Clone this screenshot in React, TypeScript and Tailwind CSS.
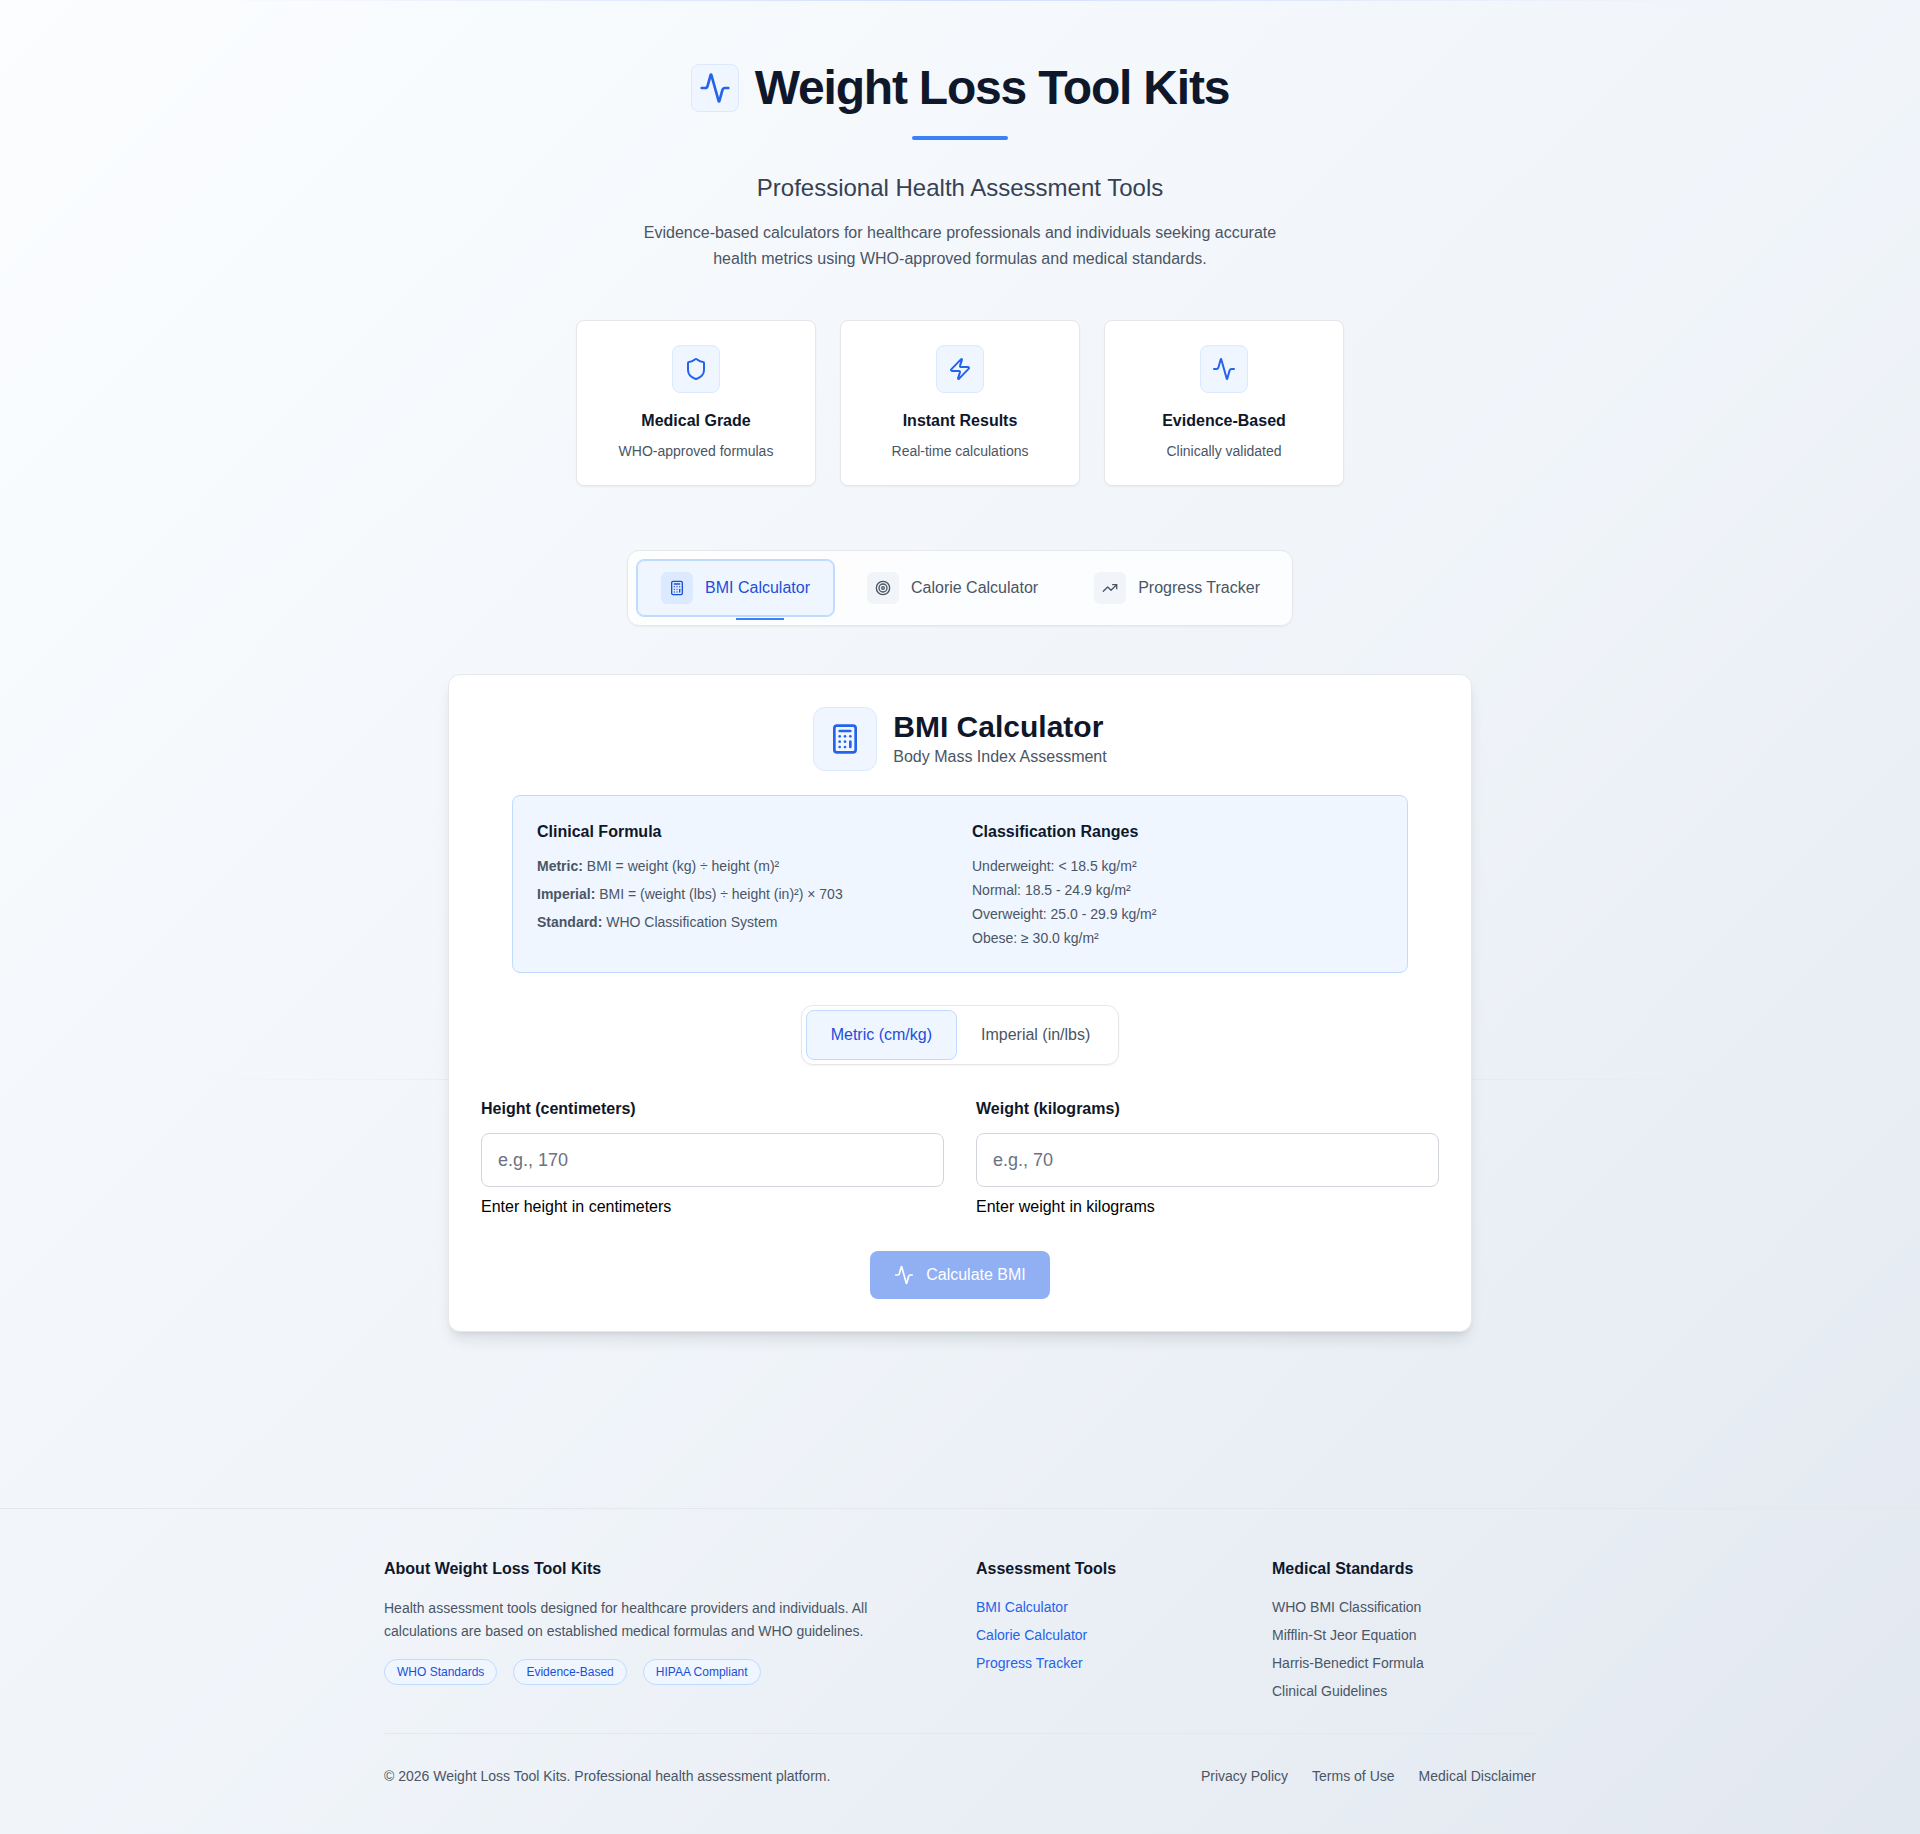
import { useState } from 'react';
import type { FormEvent } from 'react';
import { Activity, Calculator, Shield, Target, TrendingUp, Zap } from 'lucide-react';
import type { LucideIcon } from 'lucide-react';

type Units = 'metric' | 'imperial';

const features: { icon: LucideIcon; title: string; text: string }[] = [
  { icon: Shield, title: 'Medical Grade', text: 'WHO-approved formulas' },
  { icon: Zap, title: 'Instant Results', text: 'Real-time calculations' },
  { icon: Activity, title: 'Evidence-Based', text: 'Clinically validated' },
];

const tabs: { id: string; icon: LucideIcon; label: string }[] = [
  { id: 'bmi', icon: Calculator, label: 'BMI Calculator' },
  { id: 'calorie', icon: Target, label: 'Calorie Calculator' },
  { id: 'progress', icon: TrendingUp, label: 'Progress Tracker' },
];

const formulas = [
  { name: 'Metric:', text: 'BMI = weight (kg) ÷ height (m)²' },
  { name: 'Imperial:', text: 'BMI = (weight (lbs) ÷ height (in)²) × 703' },
  { name: 'Standard:', text: 'WHO Classification System' },
];

const ranges = [
  'Underweight: < 18.5 kg/m²',
  'Normal: 18.5 - 24.9 kg/m²',
  'Overweight: 25.0 - 29.9 kg/m²',
  'Obese: ≥ 30.0 kg/m²',
];

const badges = ['WHO Standards', 'Evidence-Based', 'HIPAA Compliant'];
const standards = [
  'WHO BMI Classification',
  'Mifflin-St Jeor Equation',
  'Harris-Benedict Formula',
  'Clinical Guidelines',
];
const legalLinks = ['Privacy Policy', 'Terms of Use', 'Medical Disclaimer'];

function Header() {
  return (
    <header className="px-6 pt-16 text-center">
      <div className="flex items-center justify-center gap-4">
        <div className="flex h-12 w-12 items-center justify-center rounded-lg border border-[#dbeafe] bg-[#eff6ff]">
          <Activity className="h-8 w-8 text-[#2563eb]" />
        </div>
        <h1 className="text-5xl font-bold tracking-tight text-[#0f172a]">Weight Loss Tool Kits</h1>
      </div>
      <div className="mx-auto mt-6 h-1 w-24 rounded-full bg-[#3b82f6]" />
      <p className="mt-8 text-2xl text-gray-700">Professional Health Assessment Tools</p>
      <p className="mx-auto mt-4 max-w-2xl leading-[26px] text-gray-600">
        Evidence-based calculators for healthcare professionals and individuals seeking accurate
        health metrics using WHO-approved formulas and medical standards.
      </p>

      <div className="mx-auto mt-12 grid max-w-3xl grid-cols-1 gap-6 sm:grid-cols-3">
        {features.map(({ icon: Icon, title, text }) => (
          <div key={title} className="rounded-lg border border-gray-200 bg-white p-6 shadow-xs">
            <div className="mx-auto flex h-12 w-12 items-center justify-center rounded-lg border border-[#dbeafe] bg-[#eff6ff]">
              <Icon className="h-6 w-6 text-[#2563eb]" />
            </div>
            <h3 className="mt-4 font-semibold text-[#0f172a]">{title}</h3>
            <p className="mt-2 text-sm text-gray-600">{text}</p>
          </div>
        ))}
      </div>
    </header>
  );
}

function TabBar({ active, onChange }: { active: string; onChange: (id: string) => void }) {
  return (
    <nav className="mt-16 flex justify-center px-6">
      <div className="flex flex-wrap gap-2 rounded-xl border border-gray-200 bg-white/80 p-2 shadow-xs">
        {tabs.map(({ id, icon: Icon, label }) => {
          const isActive = id === active;
          return (
            <button
              key={id}
              type="button"
              onClick={() => onChange(id)}
              className={`relative flex items-center gap-3 rounded-lg px-6 py-3 font-medium ${
                isActive
                  ? 'border border-[#bfdbfe] bg-[#eff6ff] text-[#1d4ed8] inset-ring inset-ring-[#bfdbfe]'
                  : 'text-gray-600 hover:bg-gray-50'
              }`}
            >
              <span
                className={`flex h-8 w-8 items-center justify-center rounded-md ${
                  isActive ? 'bg-[#dbeafe]' : 'bg-slate-100'
                }`}
              >
                <Icon className="h-4 w-4" />
              </span>
              {label}
              {isActive && <span className="absolute -bottom-1 left-1/2 h-0.5 w-12 bg-[#3b82f6]" />}
            </button>
          );
        })}
      </div>
    </nav>
  );
}

interface FieldProps {
  id: string;
  label: string;
  placeholder: string;
  hint: string;
  value: string;
  onChange: (value: string) => void;
}

function Field({ id, label, placeholder, hint, value, onChange }: FieldProps) {
  return (
    <div>
      <label htmlFor={id} className="block font-semibold text-[#0f172a]">
        {label}
      </label>
      <input
        id={id}
        type="number"
        value={value}
        placeholder={placeholder}
        aria-describedby={`${id}-hint`}
        onChange={(e) => onChange(e.target.value)}
        className="mt-3 block w-full rounded-lg border border-gray-300 bg-white px-4 py-3 text-lg text-gray-900 placeholder:text-gray-500 focus:border-[#3b82f6] focus:outline-none"
      />
      <p id={`${id}-hint`} className="mt-2 text-black">
        {hint}
      </p>
    </div>
  );
}

function BmiCalculator() {
  const [units, setUnits] = useState<Units>('metric');
  const [height, setHeight] = useState('');
  const [weight, setWeight] = useState('');
  const [bmi, setBmi] = useState<number | null>(null);
  const metric = units === 'metric';

  const changeUnits = (next: Units) => {
    setUnits(next);
    setBmi(null);
  };

  const calculate = (e: FormEvent) => {
    e.preventDefault();
    const h = Number(height);
    const w = Number(weight);
    setBmi(metric ? w / (h / 100) ** 2 : (w / h ** 2) * 703);
  };

  const unitClass = (on: boolean) =>
    `rounded-lg px-6 py-3 font-medium ${
      on ? 'border border-[#bfdbfe] bg-[#eff6ff] text-[#1d4ed8]' : 'text-gray-600'
    }`;

  return (
    <section className="rounded-xl border border-gray-200 bg-white p-8 shadow-lg">
      <div className="flex items-center justify-center gap-4">
        <div className="flex h-16 w-16 items-center justify-center rounded-xl border border-[#dbeafe] bg-[#eff6ff]">
          <Calculator className="h-8 w-8 text-[#2563eb]" />
        </div>
        <div>
          <h2 className="text-3xl font-bold text-[#0f172a]">BMI Calculator</h2>
          <p className="text-gray-600">Body Mass Index Assessment</p>
        </div>
      </div>

      <div className="mx-auto mt-6 grid max-w-4xl gap-6 rounded-lg border border-[#bfdbfe] bg-[#eff6ff] p-6 md:grid-cols-2">
        <div>
          <h3 className="font-semibold text-[#0f172a]">Clinical Formula</h3>
          <div className="mt-3 space-y-2 text-sm text-gray-600">
            {formulas.map((f) => (
              <p key={f.name}>
                <strong>{f.name}</strong> {f.text}
              </p>
            ))}
          </div>
        </div>
        <div>
          <h3 className="font-semibold text-[#0f172a]">Classification Ranges</h3>
          <div className="mt-3 space-y-1 text-sm text-gray-600">
            {ranges.map((range) => (
              <p key={range}>{range}</p>
            ))}
          </div>
        </div>
      </div>

      <div className="mt-8 flex justify-center">
        <div className="flex rounded-xl border border-gray-200 bg-white p-1 shadow-xs">
          <button type="button" onClick={() => changeUnits('metric')} className={unitClass(metric)}>
            Metric (cm/kg)
          </button>
          <button type="button" onClick={() => changeUnits('imperial')} className={unitClass(!metric)}>
            Imperial (in/lbs)
          </button>
        </div>
      </div>

      <form onSubmit={calculate}>
        <div className="mt-8 grid gap-8 md:grid-cols-2">
          <Field
            id="height"
            label={metric ? 'Height (centimeters)' : 'Height (inches)'}
            placeholder={metric ? 'e.g., 170' : 'e.g., 67'}
            hint={metric ? 'Enter height in centimeters' : 'Enter height in inches'}
            value={height}
            onChange={setHeight}
          />
          <Field
            id="weight"
            label={metric ? 'Weight (kilograms)' : 'Weight (pounds)'}
            placeholder={metric ? 'e.g., 70' : 'e.g., 154'}
            hint={metric ? 'Enter weight in kilograms' : 'Enter weight in pounds'}
            value={weight}
            onChange={setWeight}
          />
        </div>
        <div className="mt-8 flex justify-center">
          <button
            type="submit"
            disabled={!height || !weight}
            className="flex items-center gap-3 rounded-lg bg-[#2563eb] px-6 py-3 font-medium text-white disabled:cursor-not-allowed disabled:opacity-50"
          >
            <Activity className="h-5 w-5" />
            Calculate BMI
          </button>
        </div>
      </form>

      {bmi !== null && (
        <p className="mt-6 text-center text-lg font-semibold text-[#0f172a]">BMI: {bmi.toFixed(1)}</p>
      )}
    </section>
  );
}

function Footer() {
  return (
    <footer className="mt-44 border-t border-gray-200 px-6 py-12">
      <div className="mx-auto max-w-6xl">
        <div className="grid gap-8 md:grid-cols-4">
          <div className="md:col-span-2">
            <h4 className="font-semibold text-[#0f172a]">About Weight Loss Tool Kits</h4>
            <p className="mt-4 text-sm leading-[23px] text-gray-600">
              Health assessment tools designed for healthcare providers and individuals. All
              calculations are based on established medical formulas and WHO guidelines.
            </p>
            <div className="mt-4 flex flex-wrap gap-4">
              {badges.map((badge) => (
                <span
                  key={badge}
                  className="rounded-full border border-[#bfdbfe] bg-[#eff6ff] px-3 py-1 text-xs font-medium text-[#1d4ed8]"
                >
                  {badge}
                </span>
              ))}
            </div>
          </div>
          <div>
            <h4 className="font-semibold text-[#0f172a]">Assessment Tools</h4>
            <ul className="mt-4 space-y-2 text-sm">
              {tabs.map((tab) => (
                <li key={tab.id}>
                  <a href={`#${tab.id}`} className="text-[#2563eb] hover:text-[#1d4ed8]">
                    {tab.label}
                  </a>
                </li>
              ))}
            </ul>
          </div>
          <div>
            <h4 className="font-semibold text-[#0f172a]">Medical Standards</h4>
            <ul className="mt-4 space-y-2 text-sm text-gray-600">
              {standards.map((standard) => (
                <li key={standard}>{standard}</li>
              ))}
            </ul>
          </div>
        </div>

        <div className="mt-8 flex flex-wrap items-center justify-between gap-4 border-t border-gray-200 pt-8 text-sm text-gray-600">
          <p>© 2026 Weight Loss Tool Kits. Professional health assessment platform.</p>
          <div className="flex gap-6">
            {legalLinks.map((link) => (
              <a key={link} href="#" className="hover:text-[#2563eb]">
                {link}
              </a>
            ))}
          </div>
        </div>
      </div>
    </footer>
  );
}

export default function App() {
  const [tab, setTab] = useState('bmi');

  return (
    <div className="relative min-h-screen bg-[linear-gradient(135deg,#fcfdff_0%,#f6fafd_20%,#f1f5fa_50%,#e2e8f0_100%)] font-['Liberation_Sans',sans-serif]">
      {/* hairlines along the top and the first fold */}
      <div className="absolute inset-x-0 top-0 h-px bg-linear-to-r from-transparent from-10% via-indigo-200/70 to-transparent to-90%" />
      <div className="absolute inset-x-0 top-[1079px] h-px bg-linear-to-r from-transparent from-10% via-gray-300/70 to-transparent to-90%" />

      <div className="relative">
        <Header />
        <TabBar active={tab} onChange={setTab} />
        <main className="mx-auto mt-12 max-w-5xl">
          <BmiCalculator />
        </main>
        <Footer />
      </div>
    </div>
  );
}
